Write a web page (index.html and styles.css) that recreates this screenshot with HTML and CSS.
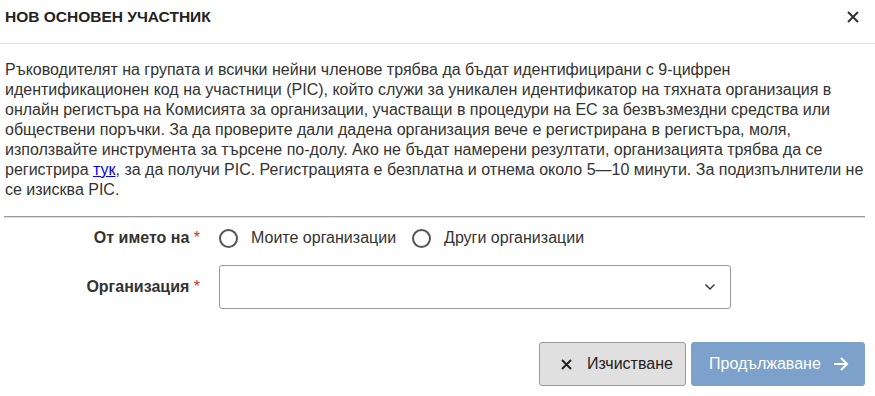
FILE: index.html
```html
<!DOCTYPE html>
<html lang="bg">

<head>
    <meta charset="UTF-8">
    <meta name="viewport" content="width=device-width, initial-scale=1.0">
    <title>Нов основен участник</title>
    <link rel="stylesheet" href="styles.css">
</head>

<body>
    <div class="modal-header">
        <h4 class="modal-title">НОВ ОСНОВЕН УЧАСТНИК</h4>
        <button class="close" type="button">
            <svg width="12" height="12" viewBox="0 0 12 12"><path d="M1 1L11 11M11 1L1 11" stroke="#333" stroke-width="2" /></svg>
        </button>
    </div>
    <div class="modal-body">
        <p class="intro">Ръководителят на групата и всички нейни членове трябва да бъдат идентифицирани с 9-цифрен
            идентификационен код на участници (PIC), който служи за уникален идентификатор на тяхната организация в
            онлайн регистъра на Комисията за организации, участващи в процедури на ЕС за безвъзмездни средства или
            обществени поръчки. За да проверите дали дадена организация вече е регистрирана в регистъра, моля,
            използвайте инструмента за търсене по-долу. Ако не бъдат намерени резултати, организацията трябва да се
            регистрира <a href="#">тук</a>, за да получи PIC. Регистрацията е безплатна и отнема около 5—10 минути. За подизпълнители не
            се изисква PIC.</p>
        <hr class="divider">
        <div class="form-row">
            <label class="form-label">От името на <span class="req">*</span></label>
            <div class="radios">
                <label class="radio"><span class="circle"></span>Моите организации</label>
                <label class="radio"><span class="circle"></span>Други организации</label>
            </div>
        </div>
        <div class="form-row">
            <label class="form-label">Организация <span class="req">*</span></label>
            <div class="select">
                <svg width="12" height="8" viewBox="0 0 12 8"><path d="M1.5 1.5L6 6L10.5 1.5" fill="none" stroke="#333" stroke-width="1.4" /></svg>
            </div>
        </div>
        <div class="actions">
            <button class="btn btn-clear" type="button">
                <svg width="11" height="11" viewBox="0 0 11 11"><path d="M1 1L10 10M10 1L1 10" stroke="#222" stroke-width="2" /></svg>
                Изчистване
            </button>
            <button class="btn btn-next" type="button">
                Продължаване
                <svg width="16" height="14" viewBox="0 0 16 14"><path d="M1 7H14M8 1L14 7L8 13" fill="none" stroke="#fff" stroke-width="2" /></svg>
            </button>
        </div>
    </div>
</body>

</html>
```

FILE: styles.css
```css
* {
    margin: 0;
    padding: 0;
    box-sizing: border-box;
}

body {
    font-family: "Liberation Sans", Arial, sans-serif;
    font-size: 16px;
    color: #333;
    background: #fff;
}

.modal-header {
    height: 44px;
    display: flex;
    align-items: center;
    justify-content: space-between;
    padding: 0 16px 0 5px;
    border-bottom: 1px solid #e5e5e5;
}

.modal-title {
    font-size: 15.5px;
    font-weight: bold;
    color: #222;
    margin-top: -9px;
}

.close {
    border: none;
    background: none;
    display: flex;
    margin-top: -10px;
}

.modal-body {
    padding: 16px 10px 0 5px;
}

.intro {
    line-height: 20px;
}

.intro a {
    color: #0000ee;
}

.divider {
    border: none;
    border-top: 1px solid #999;
    border-bottom: 1px solid #e0e0e0;
    margin: 16px 0 0 -1px;
}

.form-row {
    display: flex;
    align-items: center;
    margin-top: 8px;
}

.form-row + .form-row {
    margin-top: 15px;
}

.form-label {
    width: 214px;
    padding-right: 19px;
    text-align: right;
    font-weight: bold;
    color: #333;
}

.req {
    color: #c9302c;
    font-weight: normal;
}

.radios {
    display: flex;
    gap: 16px;
    height: 24px;
    align-items: center;
}

.radio {
    display: flex;
    align-items: center;
    color: #333;
}

.circle {
    width: 19px;
    height: 19px;
    border: 2px solid #555;
    border-radius: 50%;
    margin-right: 13px;
}

.select {
    width: 512px;
    height: 44px;
    border: 1px solid #999;
    border-radius: 3px;
    display: flex;
    align-items: center;
    justify-content: flex-end;
    padding-right: 14px;
}

.actions {
    display: flex;
    justify-content: flex-end;
    gap: 5px;
    margin-top: 33px;
}

.btn {
    height: 44px;
    border-radius: 3px;
    font-family: "Liberation Sans", Arial, sans-serif;
    font-size: 16px;
    display: flex;
    align-items: center;
}

.btn-clear {
    width: 147px;
    background: #e0e0e0;
    border: 1px solid #9a9a9a;
    color: #222;
    padding-left: 21px;
    gap: 15px;
}

.btn-next {
    width: 174px;
    background: #7ca1ca;
    border: 1px solid #7ca1ca;
    color: #fff;
    padding-left: 17px;
    gap: 12px;
}
```
